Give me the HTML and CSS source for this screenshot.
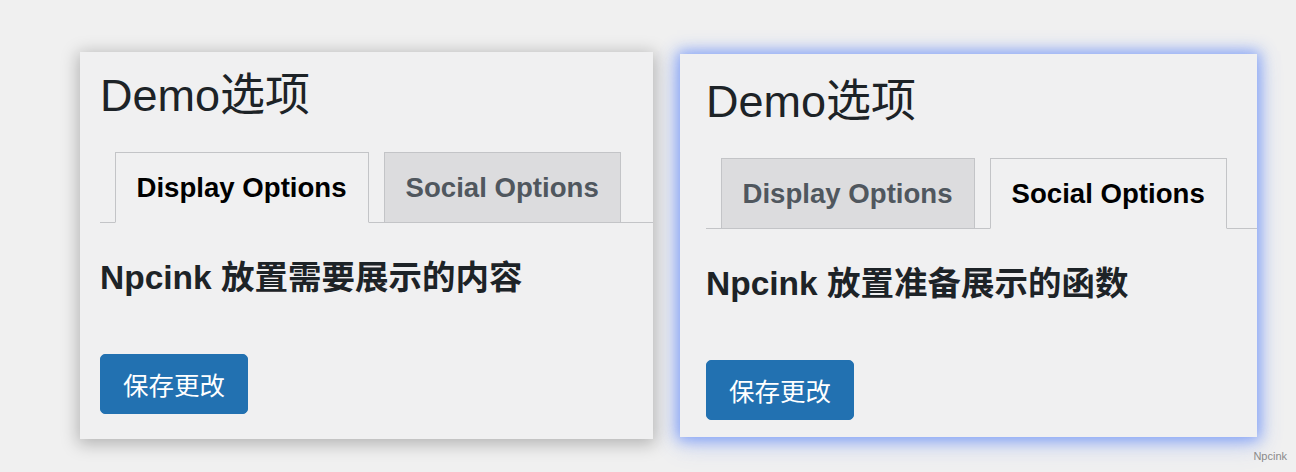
FILE: index.html
```html
<!DOCTYPE html>
<html lang="zh-CN">
<head>
<meta charset="utf-8">
<title>Demo选项</title>
<link rel="stylesheet" href="styles.css">
</head>
<body>
<div class="stage">
  <section class="panel panel-grey">
    <h1 class="title">Demo选项</h1>
    <nav class="tabs">
      <a class="tab tab-active">Display Options</a>
      <a class="tab">Social Options</a>
    </nav>
    <h2 class="heading">Npcink 放置需要展示的内容</h2>
    <button class="btn" type="button">保存更改</button>
  </section>
  <section class="panel panel-blue">
    <h1 class="title">Demo选项</h1>
    <nav class="tabs">
      <a class="tab">Display Options</a>
      <a class="tab tab-active">Social Options</a>
    </nav>
    <h2 class="heading">Npcink 放置准备展示的函数</h2>
    <button class="btn" type="button">保存更改</button>
  </section>
</div>
<div class="watermark">Npcink</div>
</body>
</html>
```
FILE: styles.css
```css
html, body {
  margin: 0;
  padding: 0;
}
body {
  background: #f0f0f0;
  width: 1296px;
  height: 472px;
  overflow: hidden;
  position: relative;
  font-family: "Liberation Sans", "Noto Sans CJK SC", sans-serif;
  color: #1d2327;
}
.stage {
  display: flex;
  align-items: flex-start;
  gap: 27px;
  padding: 52px 0 0 80px;
}
.panel {
  background: #f0f0f1;
  display: flex;
  flex-direction: column;
  align-items: flex-start;
}
.panel-grey {
  width: 573px;
  padding: 15px 0 25px 20px;
  box-sizing: border-box;
  box-shadow: 0 3px 16px 2px rgba(0, 0, 0, 0.26);
}
.panel-blue {
  width: 577px;
  margin-top: 2px;
  padding: 19px 0 17px 26px;
  box-sizing: border-box;
  box-shadow: 0 0 14px 3px rgba(95, 135, 250, 0.7), 0 6px 24px rgba(95, 135, 250, 0.3);
}
.title {
  margin: 0;
  font-size: 45px;
  line-height: 58px;
  font-weight: 400;
  color: #1d2327;
}
.tabs {
  align-self: stretch;
  margin-top: 27px;
  display: flex;
  align-items: flex-end;
  border-bottom: 1px solid #c3c4c7;
}
.tab {
  margin: 0 0 -1px 14.5px;
  padding: 11px 21.5px 11px 21px;
  line-height: 47px;
  font-size: 27.6px;
  font-weight: 700;
  color: #50575e;
  background: #dcdcde;
  border: 1px solid #c3c4c7;
  white-space: nowrap;
}
.tab-active {
  color: #000;
  background: #f0f0f1;
  border-bottom-color: #f0f0f1;
}
.heading {
  margin: 33px 0 55px;
  font-size: 33.5px;
  line-height: 43px;
  font-weight: 700;
  color: #1d2327;
}
.btn {
  margin: 0;
  padding: 0 22px;
  height: 60px;
  line-height: 58px;
  font-family: "Noto Sans CJK SC", sans-serif;
  font-size: 25.5px;
  color: #fff;
  background: #2271b1;
  border: 1px solid #2271b1;
  border-radius: 5px;
}
.watermark {
  position: absolute;
  right: 9px;
  bottom: 9px;
  font-family: "Liberation Sans", sans-serif;
  font-size: 11px;
  line-height: 13px;
  color: #8a8a8a;
}
```
